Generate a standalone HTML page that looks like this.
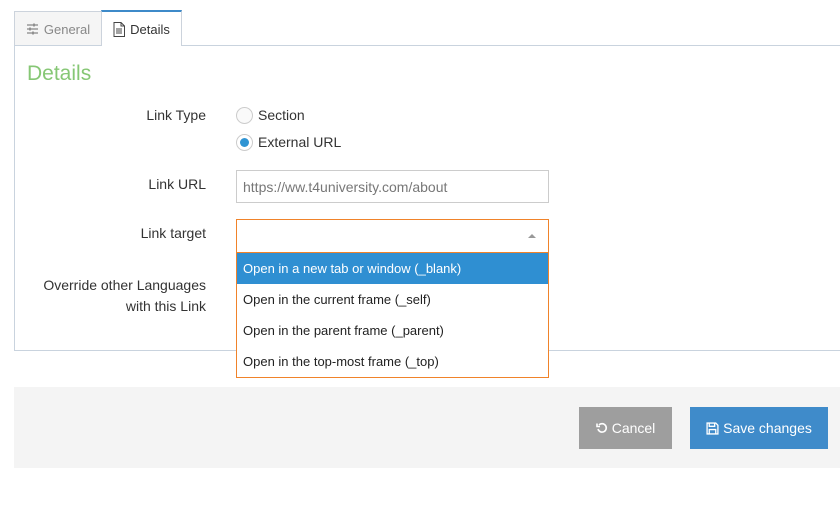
<!DOCTYPE html>
<html><head><meta charset="utf-8"><style>
*{box-sizing:border-box;margin:0;padding:0}
body{width:840px;height:519px;background:#fff;font-family:"Liberation Sans",sans-serif;position:relative;overflow:hidden;color:#333}
.abs{position:absolute}
.tab{position:absolute;top:11px;height:35px;border:1px solid #ccd3dc;font-size:13px;display:flex;align-items:center;justify-content:center;gap:5px}
.panel{position:absolute;left:14px;top:45px;width:840px;height:306px;border:1px solid #c9d3de}
.lbl{position:absolute;font-size:14px;color:#333;text-align:right;right:634px}
.radio{position:absolute;left:236px;width:17px;height:17px;border-radius:50%;border:1px solid #ccc;background:#fafafa}
.rt{position:absolute;left:258px;font-size:14px}
.opt{position:absolute;left:237px;width:311px;height:31px;font-size:13px;padding-left:6px;line-height:31px;background:#fff;color:#222}
</style></head><body>
<div class="tab" style="left:14px;width:88px;background:#f5f5f5;color:#888;border-bottom:none">
<svg width="13" height="12" viewBox="0 0 13 12" stroke="#888" stroke-width="1.2" fill="none"><path d="M1 2h11M1 6h11M1 10h11"/><path d="M8 0.5v3M4 4.5v3M7 8.5v3" stroke-width="1.6"/></svg>General</div>
<div class="tab" style="left:101px;top:10px;width:81px;height:36px;background:#fff;border-top:2px solid #3d8ac9;border-bottom:none;color:#333;z-index:2">
<svg width="12" height="15" viewBox="0 0 12 15" fill="none" stroke="#444" stroke-width="1"><path d="M1 .5h7l3.5 3.5v10.5H1z"/><path d="M8 .5v3.5h3.5M3 7h6M3 9h6M3 11h6"/></svg>Details</div>
<div class="panel"></div>
<div class="abs" style="left:27px;top:62px;font-size:21px;color:#86c775;font-weight:300">Details</div>
<div class="lbl" style="top:107px">Link Type</div>
<div class="radio" style="top:107px"></div><div class="rt" style="top:107px">Section</div>
<div class="radio" style="top:134px;background:#fff"><div style="position:absolute;left:3px;top:3px;width:9px;height:9px;border-radius:50%;background:#2f94d3"></div></div><div class="rt" style="top:134px">External URL</div>
<div class="lbl" style="top:176px">Link URL</div>
<div class="abs" style="left:236px;top:170px;width:313px;height:33px;border:1px solid #ccc;font-size:14px;color:#777;padding:8px 0 0 6px">https://ww.t4university.com/about</div>
<div class="lbl" style="top:225px">Link target</div>
<div class="lbl" style="top:275px;line-height:21px">Override other Languages<br>with this Link</div>
<div class="abs" style="left:236px;top:219px;width:313px;height:159px;border:1px solid #f0832a;background:#fff"></div>
<div class="abs" style="left:528px;top:234px;width:0;height:0;border-left:4px solid transparent;border-right:4px solid transparent;border-bottom:4px solid #999"></div>
<div class="abs" style="left:237px;top:252px;width:311px;height:1px;background:#f0832a"></div>
<div class="opt" style="top:253px;background:#2f8fd2;color:#fff">Open in a new tab or window (_blank)</div>
<div class="opt" style="top:284px">Open in the current frame (_self)</div>
<div class="opt" style="top:315px">Open in the parent frame (_parent)</div>
<div class="opt" style="top:346px">Open in the top-most frame (_top)</div>
<div class="abs" style="left:14px;top:387px;width:826px;height:81px;background:#f4f4f4"></div>
<div class="abs" style="left:579px;top:407px;width:93px;height:42px;background:#9e9e9e;color:#fff;font-size:14px;display:flex;align-items:center;justify-content:center;gap:4px">
<svg width="12" height="12" viewBox="0 0 12 12" fill="none" stroke="#fff" stroke-width="1.6"><path d="M3 3A4.2 4.2 0 1 1 2 7"/><path d="M1 1.5v3h3" /></svg>Cancel</div>
<div class="abs" style="left:690px;top:407px;width:138px;height:42px;background:#3f8bca;color:#fff;font-size:14px;display:flex;align-items:center;justify-content:center;gap:4px">
<svg width="13" height="13" viewBox="0 0 12 12" fill="none" stroke="#fff" stroke-width="1.2"><path d="M1 1h8l2 2v8H1z"/><path d="M3 1v3h5V1M3 11V7h6v4"/></svg>Save changes</div>
</body></html>
